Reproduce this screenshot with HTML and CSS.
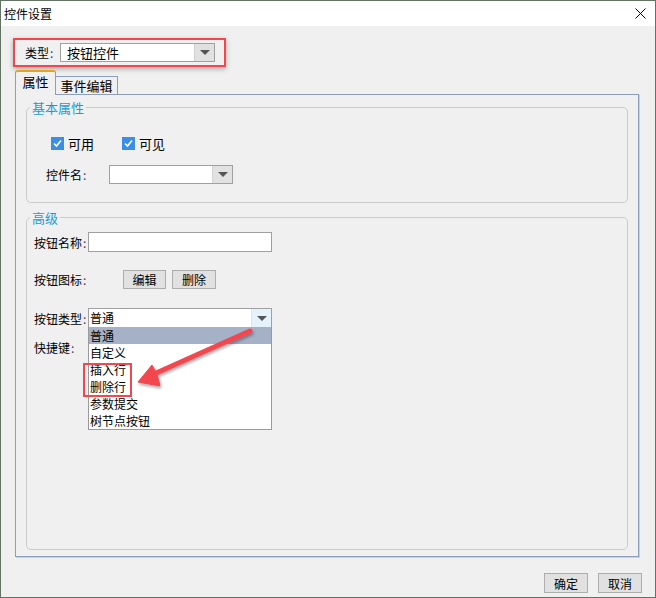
FILE: index.html
```html
<!DOCTYPE html>
<html lang="zh-CN">
<head>
  <meta charset="UTF-8" />
  <title>控件设置</title>
  <link rel="stylesheet" href="styles.css">
</head>
<body>
  <div class="window">
    <div class="titlebar">
      <span class="title">控件设置</span>
      <svg class="close" width="11" height="11" viewBox="0 0 11 11">
        <path d="M0.5 0.5 L10.5 10.5 M10.5 0.5 L0.5 10.5" stroke="#000" stroke-width="1" fill="none"/>
      </svg>
    </div>

    <div class="type-box">
      <span class="type-label">类型<span class="colon">:</span></span>
      <div class="combo type-combo">
        <span class="combo-text">按钮控件</span>
        <span class="combo-arrow"><i class="tri"></i></span>
      </div>
    </div>

    <div class="tabs">
      <div class="tab active">属性</div>
      <div class="tab">事件编辑</div>
    </div>

    <div class="panel">
      <div class="group basic">
        <span class="group-title">基本属性</span>
        <div class="check-row">
          <label class="check"><span class="box"><svg width="13" height="13" viewBox="0 0 13 13"><path d="M3 6.5 L5.5 9 L10 3.5" stroke="#fff" stroke-width="1.6" fill="none"/></svg></span>可用</label>
          <label class="check"><span class="box"><svg width="13" height="13" viewBox="0 0 13 13"><path d="M3 6.5 L5.5 9 L10 3.5" stroke="#fff" stroke-width="1.6" fill="none"/></svg></span>可见</label>
        </div>
        <div class="name-row">
          <span class="name-label">控件名<span class="colon">:</span></span>
          <div class="combo name-combo">
            <span class="combo-text"></span>
            <span class="combo-arrow"><i class="tri"></i></span>
          </div>
        </div>
      </div>

      <div class="group advanced">
        <span class="group-title">高级</span>
        <div class="row row-name">
          <span class="row-label">按钮名称<span class="colon">:</span></span>
          <div class="input"></div>
        </div>
        <div class="row row-icon">
          <span class="row-label">按钮图标<span class="colon">:</span></span>
          <button class="btn edit">编辑</button>
          <button class="btn">删除</button>
        </div>
        <div class="row row-type">
          <span class="row-label">按钮类型<span class="colon">:</span></span>
          <div class="combo type-list-combo">
            <span class="combo-text">普通</span>
            <span class="combo-arrow hover"><i class="tri"></i></span>
            <ul class="dropdown">
              <li class="selected">普通</li>
              <li>自定义</li>
              <li>插入行</li>
              <li>删除行</li>
              <li>参数提交</li>
              <li>树节点按钮</li>
            </ul>
            <div class="mark"></div>
          </div>
        </div>
        <div class="row row-key">
          <span class="row-label">快捷键<span class="colon">:</span></span>
        </div>
      </div>
    </div>

    <div class="footer">
      <button class="btn">确定</button>
      <button class="btn">取消</button>
    </div>

    <svg class="pointer" width="130" height="75" viewBox="130 320 130 75">
      <defs>
        <filter id="shade" x="-20%" y="-20%" width="140%" height="150%">
          <feDropShadow dx="1" dy="2" stdDeviation="1.6" flood-color="#000" flood-opacity="0.35"/>
        </filter>
      </defs>
      <g filter="url(#shade)" fill="#f2474f" stroke="#f2474f">
        <line x1="250" y1="331" x2="154" y2="374" stroke-width="5" stroke-linecap="round"/>
        <polygon points="138,382 152,365 157,374 160,386" stroke-width="1" stroke-linejoin="round"/>
      </g>
    </svg>
  </div>
</body>
</html>
```

FILE: styles.css
```css
body {
  margin: 0;
  font-family: "Noto Sans CJK SC", "Noto Sans", sans-serif;
  font-size: 12px;
  color: #000;
}

.window {
  position: relative;
  width: 656px;
  height: 598px;
  box-sizing: border-box;
  border: 1px solid #637263;
  background: #f0f0f0;
}

.titlebar {
  height: 25px;
  background: #fff;
  display: flex;
  align-items: center;
  justify-content: space-between;
  padding: 0 9px 0 3px;
}

.title {
  line-height: 14px;
}

.colon {
  color: #3a3a5a;
  margin-left: 1px;
}

/* type selector with red annotation frame */
.type-box {
  margin: 12px 0 0 12px;
  width: 213px;
  height: 29px;
  box-sizing: border-box;
  border: 2px solid #f2474f;
  box-shadow: 0 2px 5px rgba(0, 0, 0, 0.3);
  display: flex;
  align-items: center;
  padding-left: 10px;
}

.type-label {
  width: 35px;
}

.combo {
  position: relative;
  display: flex;
  box-sizing: border-box;
  border: 1px solid #a0a0a0;
  background: #fff;
}

.combo-text {
  flex: 1;
  line-height: 17px;
  padding-left: 1px;
}

.combo-arrow {
  width: 19px;
  background: #e1e1e1;
  border-left: 1px solid #d2d2d2;
  display: flex;
  align-items: center;
  justify-content: center;
}

.combo-arrow.hover {
  background: #e5f1fb;
  border-left-color: #d8e4f0;
}

.tri {
  width: 0;
  height: 0;
  border-left: 5px solid transparent;
  border-right: 5px solid transparent;
  border-top: 5px solid #555;
}

.type-combo {
  width: 155px;
  height: 19px;
}

.type-combo .combo-text {
  padding-left: 6px;
  font-size: 13px;
}

/* tabs */
.tabs {
  display: flex;
  align-items: flex-end;
  margin: 3px 0 0 14px;
  height: 24px;
}

.tab {
  box-sizing: border-box;
  border: 1px solid #8b9fbc;
  border-bottom: none;
  text-align: center;
}

.tab.active {
  position: relative;
  z-index: 1;
  width: 41px;
  height: 25px;
  margin-bottom: -1px;
  background: #f0f0f0;
  border-top: 2px solid #e3a51c;
  border-radius: 3px 3px 0 0;
  line-height: 20px;
  font-size: 13px;
}

.tab:not(.active) {
  width: 62px;
  height: 18px;
  border-left: none;
  line-height: 17px;
  font-size: 13px;
}

.panel {
  margin-left: 14px;
  width: 624px;
  height: 463px;
  box-sizing: border-box;
  border: 1px solid #8b9fbc;
  box-shadow: 1px 1px 0 #c9d1dc;
  padding: 12px 10px 0 10px;
}

.group {
  position: relative;
  box-sizing: border-box;
  border: 1px solid #cbcbcb;
  border-radius: 5px;
}

.group-title {
  position: absolute;
  top: -8px;
  left: 3px;
  padding: 0 2px;
  background: #f0f0f0;
  color: #1c9ad8;
  font-size: 13px;
  line-height: 15px;
}

.basic {
  height: 96px;
}

.advanced {
  margin-top: 14px;
  height: 333px;
}

.check-row {
  display: flex;
  padding: 28px 0 0 24px;
}

.check {
  display: flex;
  align-items: center;
  line-height: 15px;
  font-size: 13px;
  margin-right: 28px;
}

.box {
  width: 13px;
  height: 13px;
  background: #3a8ee6;
  margin-right: 4px;
}

.box svg {
  display: block;
}

.name-row {
  display: flex;
  align-items: center;
  margin: 14px 0 0 19px;
}

.name-label {
  width: 63px;
}

.name-combo {
  width: 124px;
  height: 19px;
}

/* advanced rows */
.row {
  display: flex;
  align-items: center;
  padding-left: 7px;
}

.row-label {
  width: 54px;
  white-space: nowrap;
}

.row-name {
  margin-top: 14px;
  height: 20px;
}

.input {
  width: 184px;
  height: 20px;
  box-sizing: border-box;
  border: 1px solid #a0a0a0;
  background: #fff;
}

.row-icon {
  margin-top: 18px;
  height: 19px;
}

.btn {
  box-sizing: border-box;
  height: 19px;
  width: 44px;
  padding: 0;
  border: 1px solid #adadad;
  background: #e1e1e1;
  font-family: inherit;
  font-size: 12px;
  color: #000;
  margin-left: 6px;
}

.btn.edit {
  width: 43px;
  margin-left: 35px;
}

.row-type {
  margin-top: 19px;
  height: 20px;
}

.type-list-combo {
  width: 184px;
  height: 20px;
}

.type-list-combo .combo-text {
  line-height: 18px;
}

.dropdown {
  position: absolute;
  left: -1px;
  top: 100%;
  width: 184px;
  box-sizing: border-box;
  margin: 0;
  padding: 0;
  list-style: none;
  border: 1px solid #9a9a9a;
  border-top: none;
  background: #fff;
}

.dropdown li {
  height: 17px;
  line-height: 18px;
  padding-left: 1px;
}

.dropdown li.selected {
  background: #a5b1c6;
}

.mark {
  position: absolute;
  left: -6px;
  top: 54px;
  width: 49px;
  height: 34px;
  box-sizing: border-box;
  border: 2px solid #f2474f;
}

.row-key {
  margin-top: 10px;
  height: 19px;
}

.footer {
  display: flex;
  justify-content: flex-end;
  gap: 10px;
  margin-top: 16px;
  padding-right: 13px;
}

.footer .btn {
  height: 20px;
  margin-left: 0;
}

.pointer {
  position: absolute;
  left: 129px;
  top: 319px;
}
```
